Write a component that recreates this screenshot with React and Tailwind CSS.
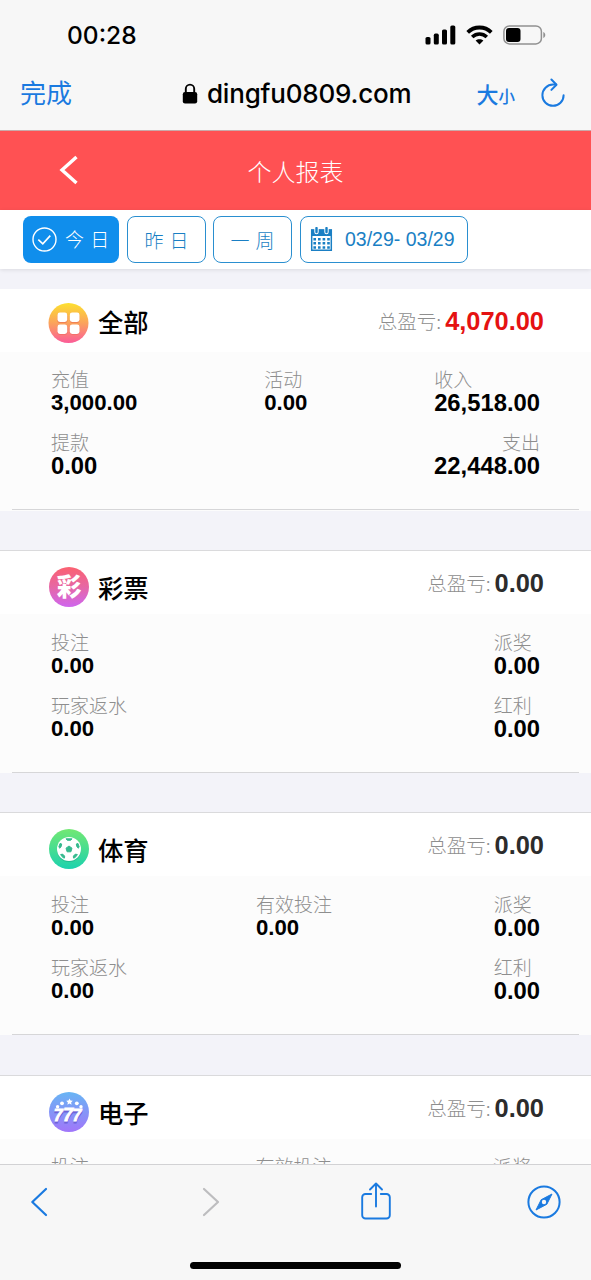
import React from "react";

const cards = [
  {
    name: "全部",
    icon: "all",
    total: "4,070.00",
    highlight: true,
    bodyClass: "pt-[15px]",
    ruleClass: "bottom-px",
    gapClass: "h-10",
    rows: [
      [["充值", "3,000.00"], ["活动", "0.00"], ["收入", "26,518.00"]],
      [["提款", "0.00", "large"], null, ["支出", "22,448.00", "end"]],
    ],
  },
  {
    name: "彩票",
    icon: "lottery",
    total: "0.00",
    bodyClass: "pt-[15.500px]",
    ruleClass: "bottom-0",
    gapClass: "h-10",
    rows: [
      [["投注", "0.00"], null, ["派奖", "0.00"]],
      [["玩家返水", "0.00"], null, ["红利", "0.00"]],
    ],
  },
  {
    name: "体育",
    icon: "sport",
    total: "0.00",
    bodyClass: "pt-4",
    ruleClass: "bottom-0",
    gapClass: "h-[41px]",
    rows: [
      [["投注", "0.00"], ["有效投注", "0.00"], ["派奖", "0.00"]],
      [["玩家返水", "0.00"], null, ["红利", "0.00"]],
    ],
  },
  {
    name: "电子",
    icon: "slots",
    total: "0.00",
    bodyClass: "pt-[15px]",
    ruleClass: "bottom-0",
    gapClass: "h-10",
    rows: [[["投注", ""], ["有效投注", ""], ["派奖", ""]]],
  },
];

const CJK = "font-['Noto_Sans_CJK_SC',sans-serif]";
const NUM = "font-['Liberation_Sans',Arial,sans-serif]";

function AllIcon() {
  return (
    <svg viewBox="0 0 40 40" className="size-full">
      <defs>
        <linearGradient id="all" x1="0" y1="0" x2="0" y2="1">
          <stop offset="0" stopColor="#fde02f" />
          <stop offset="0.5" stopColor="#fba35c" />
          <stop offset="1" stopColor="#fb5c98" />
        </linearGradient>
      </defs>
      <circle cx="20" cy="20" r="20" fill="url(#all)" />
      <g fill="#e8604f" opacity="0.5">
        <rect x="8.800" y="10.500" width="10.200" height="9.500" rx="2.800" />
        <rect x="21.300" y="10.500" width="9.700" height="9.500" rx="2.800" />
        <rect x="8.800" y="22.500" width="10.200" height="9.300" rx="2.800" />
        <rect x="21.300" y="22.500" width="9.700" height="9.300" rx="2.800" />
      </g>
      <g fill="#fff">
        <rect x="9" y="9.600" width="9.700" height="9.400" rx="2.400" />
        <rect x="21.300" y="9.600" width="9.700" height="9.400" rx="2.400" />
        <rect x="9" y="21.600" width="9.700" height="9.400" rx="2.400" />
        <rect x="21.300" y="21.600" width="9.700" height="9.400" rx="2.400" />
      </g>
    </svg>
  );
}

function LotteryIcon() {
  return (
    <svg viewBox="0 0 40 40" className="size-full">
      <defs>
        <linearGradient id="lot" x1="0" y1="0" x2="0" y2="1">
          <stop offset="0" stopColor="#fb6170" />
          <stop offset="0.5" stopColor="#e667a5" />
          <stop offset="1" stopColor="#cf66ee" />
        </linearGradient>
      </defs>
      <circle cx="20" cy="20" r="20" fill="url(#lot)" />
      <text
        x="20"
        y="29"
        fill="#fff"
        fontFamily="'Noto Sans CJK SC', sans-serif"
        fontWeight="900"
        fontSize="24.500"
        textAnchor="middle"
      >
        彩
      </text>
    </svg>
  );
}

function SportIcon() {
  return (
    <svg viewBox="0 0 40 40" className="size-full">
      <defs>
        <linearGradient id="spo" x1="0" y1="0" x2="0" y2="1">
          <stop offset="0" stopColor="#72e873" />
          <stop offset="1" stopColor="#1cd2ae" />
        </linearGradient>
      </defs>
      <circle cx="20" cy="20" r="20" fill="url(#spo)" />
      <circle cx="20" cy="21" r="12" fill="#18a886" opacity="0.6" />
      <circle cx="20" cy="20" r="12" fill="#fff" />
      <g fill="#35b98e" stroke="#35b98e" strokeLinejoin="round">
        <path d="M20 17l3 2.200-1.100 3.600h-3.800L17 19.200z" />
        <path d="M17 9.800h6l-1.300 1.500h-3.400z" />
        <path d="M9.900 17.600l1.200-3.200 1.600.6-.6 2.800-1.500 1.400z" />
        <path d="M30.100 17.600l-1.200-3.200-1.600.6.600 2.800 1.500 1.400z" />
        <path d="M11.600 25.600l2-.5 2 2-.1 2-1.600-.5z" />
        <path d="M28.400 25.600l-2-.5-2 2 .1 2 1.600-.5z" />
      </g>
    </svg>
  );
}

function SlotsIcon() {
  return (
    <svg viewBox="0 0 40 40" className="size-full">
      <defs>
        <linearGradient id="slo" x1="0" y1="0" x2="0" y2="1">
          <stop offset="0" stopColor="#68b5f4" />
          <stop offset="1" stopColor="#a176fa" />
        </linearGradient>
      </defs>
      <circle cx="20" cy="20" r="20" fill="url(#slo)" />
      <g fill="#fff">
        <path d="M20.500 6.400l1 2.200 2.300.2-1.700 1.600.5 2.300-2.100-1.200-2.100 1.200.5-2.300-1.700-1.600 2.300-.2z" />
        <circle cx="13" cy="11.300" r="1.900" />
        <circle cx="27.800" cy="11.300" r="1.900" />
        <circle cx="8.600" cy="14.800" r="1.700" />
        <circle cx="32" cy="14.800" r="1.700" />
      </g>
      <g
        fontFamily="'Liberation Sans', Arial, sans-serif"
        fontWeight="700"
        fontStyle="italic"
        strokeWidth="0.800"
      >
        <g fill="#6d63d8" stroke="#6d63d8">
          <text x="4.800" y="30.600" fontSize="16">7</text>
          <text x="23.600" y="30.600" fontSize="16">7</text>
          <text x="14" y="30.600" fontSize="18">7</text>
        </g>
        <g fill="#fff" stroke="#fff">
          <text x="4.800" y="29.400" fontSize="16">7</text>
          <text x="23.600" y="29.400" fontSize="16">7</text>
          <text x="14" y="29.400" fontSize="18">7</text>
        </g>
      </g>
    </svg>
  );
}

const icons = { all: AllIcon, lottery: LotteryIcon, sport: SportIcon, slots: SlotsIcon };

function Stat({ item, size }) {
  if (!item) return <div />;
  const [label, value, mode] = item;
  const big = size === "lg" || mode === "large";
  return (
    <div className={`flex flex-col ${value ? "" : big ? "w-[47px]" : "min-w-[43px]"}`}>
      <span
        className={`${CJK} h-6 whitespace-nowrap text-[19px] leading-6 font-light text-[#8e8e8e] ${
          mode === "end" ? "text-right" : ""
        }`}
      >
        {label}
      </span>
      <span
        className={`${NUM} h-[23px] leading-[23px] font-bold text-black ${
          big ? "text-[23.800px]" : "text-[22.200px]"
        }`}
      >
        {value}
      </span>
    </div>
  );
}

function Card({ card, first }) {
  const Icon = icons[card.icon];
  return (
    <section className="shrink-0">
      <div className="flex h-[63px] items-start justify-between bg-white pr-[47px] pl-12">
        <div className={`flex items-start gap-[9px] ${first ? "pt-[13px]" : "pt-4"}`}>
          <div className={first ? "size-[41px] pt-px" : "size-[41px] pr-[0.500px] pb-px pl-[0.500px]"}>
            <Icon />
          </div>
          <h2
            className={`${CJK} text-[25.300px] leading-[38px] font-medium text-black ${
              first ? "" : "pt-px"
            }`}
          >
            {card.name}
          </h2>
        </div>
        <div className="flex items-center gap-1 pt-[17px] leading-[30px]">
          <span className={`${CJK} text-[19.500px] font-light text-[#8e8e8e]`}>总盈亏:</span>
          <span
            className={`${NUM} text-[25.400px] font-bold ${
              card.highlight ? "text-[#e51212]" : "text-[#2c2c2c]"
            }`}
          >
            {card.total}
          </span>
        </div>
      </div>
      <div className={`relative h-[159px] bg-[#fcfcfc] px-[51px] ${card.bodyClass}`}>
        {card.rows.map((row, i) => (
          <div key={i} className="flex h-[63px] justify-between">
            <Stat item={row[0]} />
            <Stat item={row[1]} />
            <Stat item={row[2]} size="lg" />
          </div>
        ))}
        <div className={`absolute right-3 left-3 h-px bg-[#d6d6d8] ${card.ruleClass}`} />
      </div>
      <div className={`border-b border-[#dadadc] ${card.gapClass}`} />
    </section>
  );
}

function StatusBar() {
  return (
    <div className="flex h-[70px] items-center justify-between pr-[44px] pl-[67px]">
      <span className="font-['Inter',sans-serif] text-[24.500px] font-medium text-black">
        00:28
      </span>
      <div className="flex items-center">
        <svg width="31" height="20" viewBox="0 0 31 20">
          <rect x="0.500" y="12" width="5" height="7.500" rx="1.600" />
          <rect x="8.800" y="8.600" width="5" height="10.900" rx="1.600" />
          <rect x="17" y="4.500" width="5" height="15" rx="1.600" />
          <rect x="25.300" y="0.500" width="5" height="19" rx="1.600" />
        </svg>
        <svg className="ml-[10px]" width="27" height="20" viewBox="0 0 27 20" fill="none">
          <path d="M1.700 7.300C8.300 0.900 18.700 0.900 25.300 7.300" stroke="#000" strokeWidth="3.800" />
          <path d="M6.200 12C10.500 8 16.500 8 20.800 12" stroke="#000" strokeWidth="3.600" />
          <path d="M13.500 19.600l-3.900-4c2.200-1.900 5.600-1.900 7.800 0z" fill="#000" />
        </svg>
        <svg className="ml-[10px]" width="44" height="20" viewBox="0 0 44 20" fill="none">
          <rect x="0.900" y="0.900" width="37.500" height="18" rx="5.500" stroke="#919191" strokeWidth="1.500" />
          <rect x="3" y="3" width="14.500" height="14" rx="3" fill="#000" />
          <path d="M40.300 7v6c2.600-1 2.600-5 0-6z" fill="#919191" />
        </svg>
      </div>
    </div>
  );
}

function AddressBar() {
  return (
    <div className="grid h-[60px] grid-cols-[162px_auto_1fr] items-start pt-1 pr-[26px] pl-5">
      <span className={`${CJK} text-[26px] leading-[36px] text-[#1a7ae0]`}>完成</span>
      <div className="flex h-10 items-center gap-[9px]">
        <svg className="-mt-0.5" width="16" height="21" viewBox="0 0 16 21">
          <path d="M3.800 10V5.800a4.200 4.200 0 0 1 8.400 0V10" fill="none" stroke="#000" strokeWidth="1.900" />
          <rect x="0.800" y="9" width="14.400" height="11.500" rx="2.200" />
        </svg>
        <span className="font-['Inter',sans-serif] text-[26px] leading-[40px] font-medium tracking-[-0.200px] whitespace-nowrap text-black">
          dingfu0809.com
        </span>
      </div>
      <div className="-mt-px flex h-10 items-center justify-end">
        <span className={`${CJK} flex items-baseline font-medium text-[#1a7ae0]`}>
          <span className="text-[22px] leading-[38px]">大</span>
          <span className="text-[16.500px]">小</span>
        </span>
        <svg className="ml-[26px]" width="24" height="30" viewBox="0 0 24 30" fill="none" stroke="#1a7ae0" strokeWidth="2" strokeLinecap="round" strokeLinejoin="round">
          <path d="M15 6.600H12A10.600 10.600 0 1 0 22.600 17.200" />
          <path d="M10.400 1.500L15.500 6.700L10.400 11.900" />
        </svg>
      </div>
    </div>
  );
}

function FilterBar() {
  const outline =
    "flex h-[47px] items-center rounded-lg border-[1.500px] border-[#2a8fd0] text-[19px] font-light text-[#1a7fc4]";
  return (
    <div
      className={`${CJK} relative flex h-[59px] shrink-0 items-start bg-white pt-1.5 pl-[23px] shadow-[0_1px_4px_rgba(0,0,0,0.1)]`}
    >
      <button className="flex h-[47px] w-24 items-center rounded-lg bg-[#108eec] pl-[9px] text-[19px] font-light text-white">
        <svg className="-mt-px" width="25" height="25" viewBox="0 0 25 25" fill="none" stroke="#fff" strokeWidth="1.400">
          <circle cx="12.500" cy="12.500" r="11.500" />
          <path d="M6.300 12.600l4.500 4.300 7.500-8.300" strokeWidth="1.600" />
        </svg>
        <span className="ml-2 whitespace-pre [word-spacing:2px]">今 日</span>
      </button>
      <button className={`${outline} ml-2 w-[79px] justify-center pt-0.5 [word-spacing:2px]`}>昨 日</button>
      <button className={`${outline} ml-[7px] w-[79px] justify-center pt-0.5 [word-spacing:2px]`}>一 周</button>
      <button className={`${outline} ml-2 w-[168px] pl-[9px]`}>
        <svg className="-mt-px" width="23" height="25" viewBox="0 0 23 25">
          <path d="M1.700 3h19.600v20.300H1.700z" fill="none" stroke="#1a7fc4" strokeWidth="1.500" />
          <path d="M1 2.500h21v6.500H1z" fill="#1a7fc4" />
          <path d="M6.500 .5v4.500M16.500 .5v4.500" stroke="#fff" strokeWidth="4.400" strokeLinecap="round" />
          <path d="M6.500 1v4M16.500 1v4" stroke="#1a7fc4" strokeWidth="2.400" strokeLinecap="round" />
          <g stroke="#1a7fc4" strokeWidth="2.500" strokeDasharray="2.600 2">
            <path d="M3.400 12.200H20.500" />
            <path d="M3.400 16.300H20.500" />
            <path d="M3.400 20.400H20.500" />
          </g>
        </svg>
        <span className={`${NUM} ml-3 text-[19.500px] font-normal whitespace-nowrap`}>
          03/29- 03/29
        </span>
      </button>
    </div>
  );
}

function BottomBar() {
  return (
    <footer className="flex h-[116px] shrink-0 flex-col items-center border-t border-[#d2d2d4] bg-[#f7f7f7]">
      <div className="flex h-[74px] w-full items-center px-[30px]">
        <svg width="18" height="30" viewBox="0 0 18 30" fill="none" stroke="#1a7ae0" strokeWidth="2.200" strokeLinecap="round" strokeLinejoin="round">
          <path d="M16 2L2.300 15L16 28" />
        </svg>
        <svg className="ml-[154px]" width="18" height="30" viewBox="0 0 18 30" fill="none" stroke="#bdbdbf" strokeWidth="2.200" strokeLinecap="round" strokeLinejoin="round">
          <path d="M2 2L16 15L2 28" />
        </svg>
        <svg className="-mt-[3px] ml-[141px]" width="30" height="38" viewBox="0 0 30 38" fill="none" stroke="#1a7ae0" strokeWidth="1.900" strokeLinecap="round" strokeLinejoin="round">
          <path d="M10.200 12H4.500a3.300 3.300 0 0 0-3.300 3.300v17.900a3.300 3.300 0 0 0 3.300 3.300h21a3.300 3.300 0 0 0 3.300-3.300V15.300a3.300 3.300 0 0 0-3.300-3.300h-5.700" />
          <path d="M15 24.500V1.500M9 7.500l6-6 6 6" />
        </svg>
        <svg className="ml-auto" width="34" height="34" viewBox="0 0 34 34" fill="none">
          <circle cx="17" cy="17" r="15.600" stroke="#1a7ae0" strokeWidth="2" />
          <path d="M25 9L19.800 19.300L9 25L14.200 14.700z" fill="#1a7ae0" stroke="#1a7ae0" strokeLinejoin="round" />
          <circle cx="17" cy="17" r="2.200" fill="#f7f7f7" />
        </svg>
      </div>
      <div className="mt-[23px] h-[7px] w-[211px] rounded-full bg-black" />
    </footer>
  );
}

export default function App() {
  return (
    <div className="flex h-[1280px] w-[591px] flex-col overflow-hidden bg-[#f3f3f9]">
      <header className="h-[131px] shrink-0 border-b border-[#c9a9a9] bg-[#f7f7f7]">
        <StatusBar />
        <AddressBar />
      </header>
      <nav className="grid h-[79px] shrink-0 grid-cols-[1fr_auto_1fr] items-center bg-[#ff5153] pl-[59px]">
        <svg className="-mt-0.5" width="20" height="30" viewBox="0 0 20 30" fill="none" stroke="#fff" strokeWidth="3.400">
          <path d="M17.500 2L3 15L17.500 28" />
        </svg>
        <h1 className={`${CJK} -ml-[59px] text-[24px] font-light text-white`}>个人报表</h1>
      </nav>
      <FilterBar />
      <main className="flex min-h-0 flex-1 flex-col overflow-hidden pt-5">
        {cards.map((card, i) => (
          <Card key={card.name} card={card} first={i === 0} />
        ))}
      </main>
      <BottomBar />
    </div>
  );
}
